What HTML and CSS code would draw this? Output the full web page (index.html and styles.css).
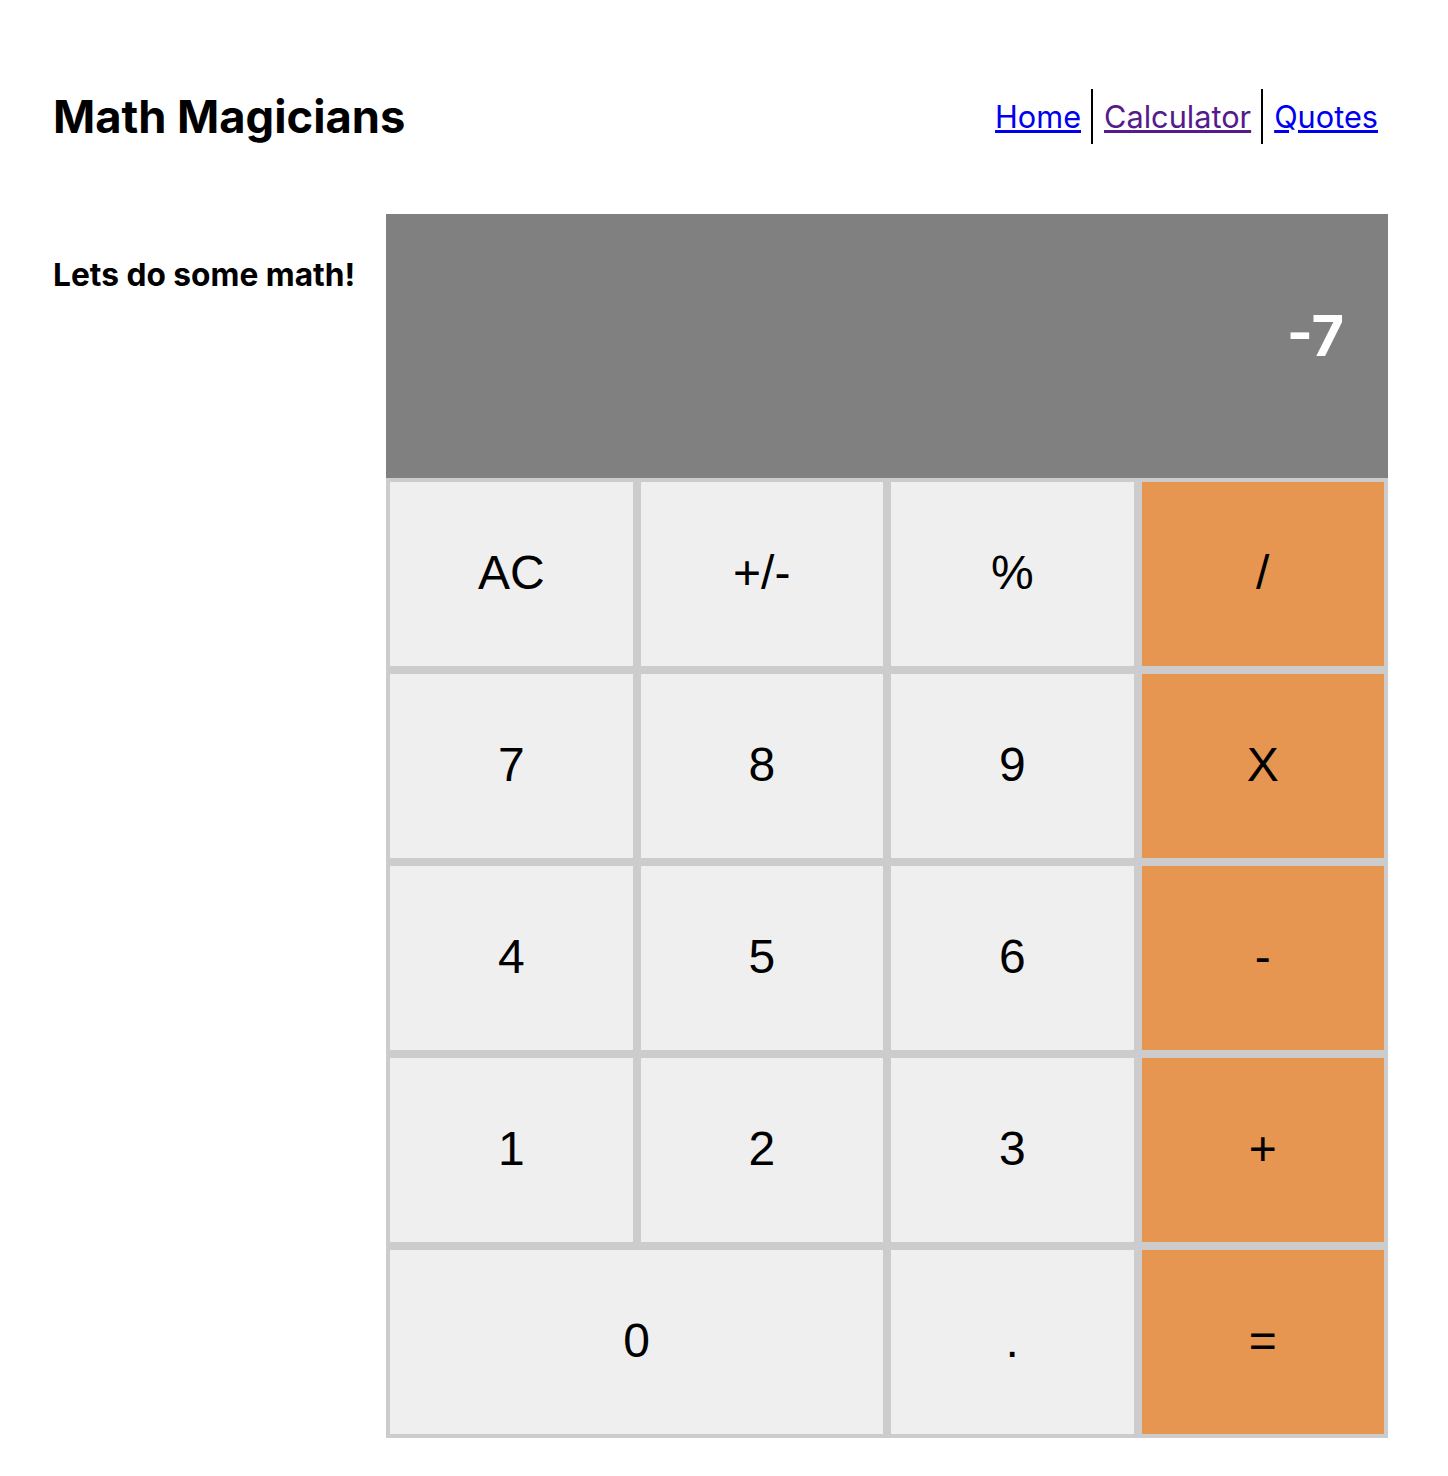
FILE: index.html
```html
<!DOCTYPE html>
<html lang="en">
<head>
<meta charset="utf-8">
<title>Math Magicians</title>
<link rel="stylesheet" href="styles.css">
</head>
<body>
<div class="page">
  <header class="header">
    <h1 class="logo">Math Magicians</h1>
    <nav>
      <ul class="nav">
        <li class="nav-item"><a href="#home" class="nav-link">Home</a></li>
        <li class="nav-item"><a href="#calc" class="nav-link visited">Calculator</a></li>
        <li class="nav-item"><a href="#quotes" class="nav-link">Quotes</a></li>
      </ul>
    </nav>
  </header>
  <main class="main">
    <h2 class="intro">Lets do some math!</h2>
    <div class="calculator">
      <div class="display">-7</div>
      <div class="keys">
        <button class="key">AC</button>
        <button class="key">+/-</button>
        <button class="key">%</button>
        <button class="key op">/</button>
        <button class="key">7</button>
        <button class="key">8</button>
        <button class="key">9</button>
        <button class="key op">X</button>
        <button class="key">4</button>
        <button class="key">5</button>
        <button class="key">6</button>
        <button class="key op">-</button>
        <button class="key">1</button>
        <button class="key">2</button>
        <button class="key">3</button>
        <button class="key op">+</button>
        <button class="key zero">0</button>
        <button class="key">.</button>
        <button class="key op">=</button>
      </div>
    </div>
  </main>
</div>
</body>
</html>
```
FILE: styles.css
```css
* { box-sizing: border-box; }
html, body { margin: 0; padding: 0; background: #fff; }
body { font-family: Inter, "Noto Sans", sans-serif; color: #000; }
.page { padding: 88px 60px 0 53px; }
.header { display: flex; justify-content: space-between; align-items: center; height: 56px; }
.logo { margin: 2px 0 0; font-size: 45.3px; font-weight: 700; line-height: 1; }
.nav { list-style: none; display: flex; margin: 0; padding: 0; }
.nav-item { display: flex; align-items: center; height: 55px; padding: 0 10px 0 11px; }
.nav-item:last-child { padding-right: 10px; }
.nav-item + .nav-item { border-left: 2px solid #000; }
.nav-link { font-size: 30.7px; color: #0000ee; text-decoration: underline; }
.nav-link.visited { color: #551a8b; }
.main { display: flex; margin-top: 70px; align-items: flex-start; }
.intro { margin: 42px 0 0; font-size: 31.7px; font-weight: 700; white-space: nowrap; line-height: 1.2; }
.calculator { flex: 0 0 1002px; margin-left: auto; display: flex; flex-direction: column; }
.display { height: 264px; background: #808080; color: #fff; display: flex; justify-content: flex-end; align-items: center; padding: 0 44px 20px 0; font-size: 56px; font-weight: 700; }
.keys { display: grid; grid-template-columns: repeat(4, 1fr); grid-auto-rows: 192px; }
.key { border: 4px solid #ccc; background: #efefef; font-family: "Liberation Sans", Arial, sans-serif; font-size: 48px; color: #000; margin: 0; padding: 0 0 3px; border-radius: 0; }
.key.op { background: #e69650; }
.key.zero { grid-column: span 2; }
```
